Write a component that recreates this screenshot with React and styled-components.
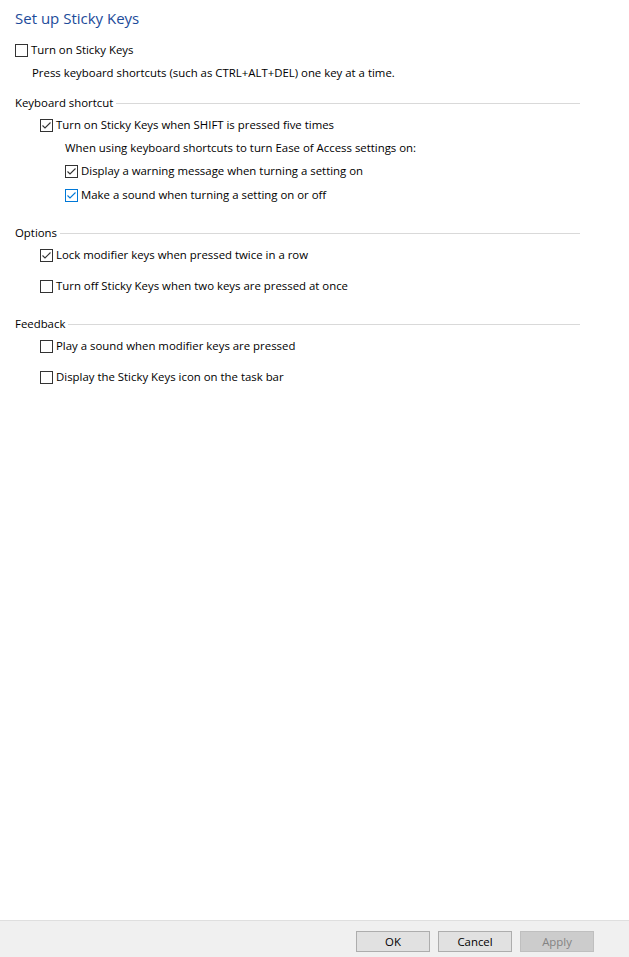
import React from "react";
import styled, { createGlobalStyle } from "styled-components";

const Global = createGlobalStyle`
  html, body { margin: 0; padding: 0; background: #fff; }
  body { font-family: "Open Sans", "Noto Sans", sans-serif; font-size: 11.4px; color: #000; }
  * { box-sizing: border-box; }
`;

const Page = styled.div`
  display: flex;
  flex-direction: column;
  min-height: 100vh;
`;

const Content = styled.main`
  flex: 1;
  padding: 7px 49px 0 15px;
`;

const Title = styled.h1`
  margin: 0;
  font-size: 15px;
  font-weight: 400;
  line-height: 22px;
  color: #1c4b9a;
`;

const Row = styled.label`
  display: flex;
  align-items: center;
  gap: 3px;
  height: 16px;
  line-height: 16px;
  margin-top: ${(p) => p.$mt || 0}px;
  margin-left: ${(p) => p.$indent || 0}px;
  white-space: nowrap;
`;

const Text = styled.div`
  height: 16px;
  line-height: 16px;
  margin-top: ${(p) => p.$mt || 0}px;
  margin-left: ${(p) => p.$indent || 0}px;
  white-space: nowrap;
`;

const GroupHeader = styled.div`
  display: flex;
  align-items: center;
  gap: 3px;
  height: 16px;
  line-height: 16px;
  margin-top: ${(p) => p.$mt || 0}px;
  white-space: nowrap;
  &::after {
    content: "";
    flex: 1;
    height: 1px;
    background: #d9d9d9;
  }
`;

const Box = styled.span`
  flex: none;
  width: 13px;
  height: 13px;
  border: 1px solid ${(p) => (p.$focus ? "#0078d7" : "#333")};
  background: #fff;
  display: inline-flex;
  align-items: center;
  justify-content: center;
`;

const Footer = styled.footer`
  height: 37px;
  flex: none;
  background: #f0f0f0;
  border-top: 1px solid #dfdfdf;
  display: flex;
  justify-content: flex-end;
  align-items: flex-start;
  gap: 8px;
  padding: 10px 35px 0 0;
`;

const Button = styled.button`
  width: 74px;
  height: 21px;
  padding: 0;
  font: inherit;
  font-size: 11.4px;
  background: ${(p) => (p.disabled ? "#cccccc" : "#e1e1e1")};
  border: 1px solid ${(p) => (p.disabled ? "#bfbfbf" : "#adadad")};
  color: ${(p) => (p.disabled ? "#838383" : "#000")};
`;

function Check({ checked, focus, label, indent, mt }) {
  const color = focus ? "#0078d7" : "#333";
  return (
    <Row $indent={indent} $mt={mt}>
      <Box $focus={focus}>
        {checked && (
          <svg width="11" height="11" viewBox="0 0 11 11">
            <path d="M1.5 5.5 L4 8 L9.5 2.5" fill="none" stroke={color} strokeWidth="1.1" />
          </svg>
        )}
      </Box>
      <span>{label}</span>
    </Row>
  );
}

export default function App() {
  return (
    <Page>
      <Global />
      <Content>
        <Title>Set up Sticky Keys</Title>
        <Check mt={13} label="Turn on Sticky Keys" />
        <Text $mt={7} $indent={17}>
          Press keyboard shortcuts (such as CTRL+ALT+DEL) one key at a time.
        </Text>

        <GroupHeader $mt={14}>Keyboard shortcut</GroupHeader>
        <Check mt={6} indent={25} checked label="Turn on Sticky Keys when SHIFT is pressed five times" />
        <Text $mt={7} $indent={50}>
          When using keyboard shortcuts to turn Ease of Access settings on:
        </Text>
        <Check mt={7} indent={50} checked label="Display a warning message when turning a setting on" />
        <Check mt={8} indent={50} checked focus label="Make a sound when turning a setting on or off" />

        <GroupHeader $mt={22}>Options</GroupHeader>
        <Check mt={6} indent={25} checked label="Lock modifier keys when pressed twice in a row" />
        <Check mt={15} indent={25} label="Turn off Sticky Keys when two keys are pressed at once" />

        <GroupHeader $mt={22}>Feedback</GroupHeader>
        <Check mt={6} indent={25} label="Play a sound when modifier keys are pressed" />
        <Check mt={15} indent={25} label="Display the Sticky Keys icon on the task bar" />
      </Content>
      <Footer>
        <Button>OK</Button>
        <Button>Cancel</Button>
        <Button disabled>Apply</Button>
      </Footer>
    </Page>
  );
}
